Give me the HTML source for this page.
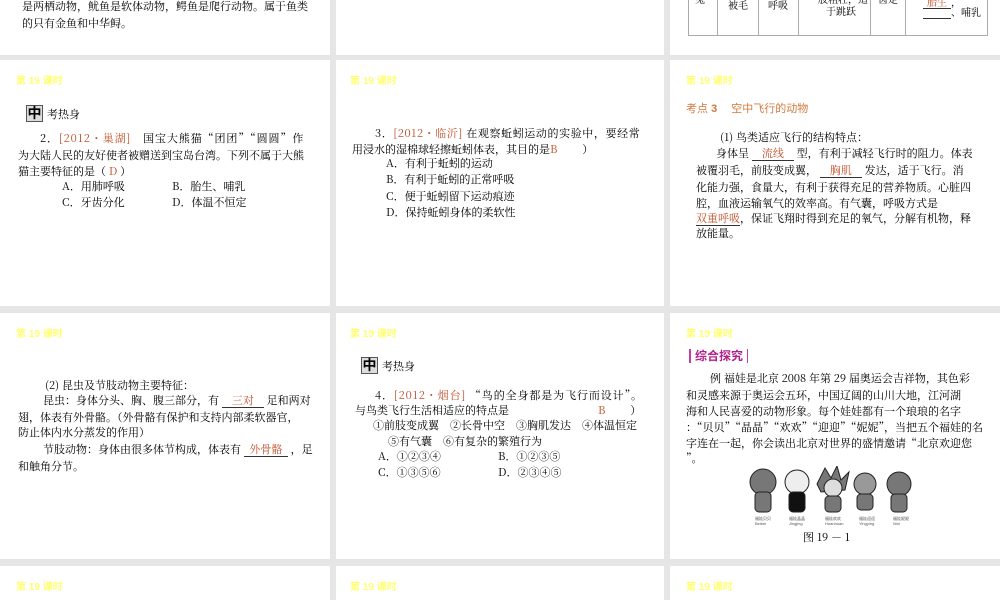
<!DOCTYPE html>
<html><head><meta charset="utf-8"><style>
body{margin:0;width:1000px;height:600px;background:#e6e6e6;position:relative;overflow:hidden;font-family:"Noto Serif CJK SC","Liberation Serif",serif;font-size:11px;color:#000}
.p{position:absolute;background:#fff}
.t{position:absolute;white-space:nowrap;line-height:16px}
.h{position:absolute;font-family:"Liberation Sans","Noto Sans CJK SC",sans-serif;font-weight:bold;font-size:10px;color:#ffff70;white-space:nowrap}
.r{color:#c0502a}
.u{display:inline-block;border-bottom:1px solid #333;text-align:center;color:#c0502a;line-height:13px}
.z{position:absolute;width:15px;height:15px;border:1px solid #555;background:#ddd;font-size:14px;line-height:15px;text-align:center;font-family:"Noto Sans CJK SC",sans-serif;font-weight:bold}
</style></head><body>
<div class="p" style="left:0;top:0;width:330px;height:55px"></div>
<div class="p" style="left:336px;top:0;width:328px;height:55px"></div>
<div class="p" style="left:670px;top:0;width:330px;height:55px"></div>
<div class="p" style="left:0;top:60px;width:330px;height:246px"></div>
<div class="p" style="left:336px;top:60px;width:328px;height:246px"></div>
<div class="p" style="left:670px;top:60px;width:330px;height:246px"></div>
<div class="p" style="left:0;top:313px;width:330px;height:246px"></div>
<div class="p" style="left:336px;top:313px;width:328px;height:246px"></div>
<div class="p" style="left:670px;top:313px;width:330px;height:246px"></div>
<div class="p" style="left:0;top:566px;width:330px;height:34px"></div>
<div class="p" style="left:336px;top:566px;width:328px;height:34px"></div>
<div class="p" style="left:670px;top:566px;width:330px;height:34px"></div>

<!-- top row -->
<div class="t" style="left:22px;top:-2px">是两栖动物，鱿鱼是软体动物，鳄鱼是爬行动物。属于鱼类</div>
<div class="t" style="left:22px;top:15px">的只有金鱼和中华鲟。</div>
<div style="position:absolute;left:688px;top:-10px;width:298px;height:45px;border:1px solid #aaa;border-top:none"></div>
<div style="position:absolute;left:717px;top:0;width:1px;height:35px;background:#aaa"></div>
<div style="position:absolute;left:758px;top:0;width:1px;height:35px;background:#aaa"></div>
<div style="position:absolute;left:798px;top:0;width:1px;height:35px;background:#aaa"></div>
<div style="position:absolute;left:870px;top:0;width:1px;height:35px;background:#aaa"></div>
<div style="position:absolute;left:905px;top:0;width:1px;height:35px;background:#aaa"></div>
<div class="t" style="left:695px;top:-9px;font-size:10px">兔</div>
<div class="t" style="left:728px;top:-3px;font-size:10px">被毛</div>
<div class="t" style="left:768px;top:-3px;font-size:10px">呼吸</div>
<div class="t" style="left:818px;top:-9px;font-size:10px">股粗壮，适</div>
<div class="t" style="left:826px;top:3px;font-size:10px">于跳跃</div>
<div class="t" style="left:878px;top:-9px;font-size:10px">齿定</div>
<div class="t" style="left:923px;top:-6px;font-size:10px"><span class="u" style="width:28px">胎生</span>，</div>
<div class="t" style="left:923px;top:4px;font-size:10px"><span class="u" style="width:28px">&nbsp;</span>、哺乳</div>

<!-- headers -->
<div class="h" style="left:16px;top:72px">第 19 课时</div>
<div class="h" style="left:350px;top:72px">第 19 课时</div>
<div class="h" style="left:686px;top:72px">第 19 课时</div>
<div class="h" style="left:16px;top:325px">第 19 课时</div>
<div class="h" style="left:350px;top:325px">第 19 课时</div>
<div class="h" style="left:686px;top:325px">第 19 课时</div>
<div class="h" style="left:16px;top:578px">第 19 课时</div>
<div class="h" style="left:350px;top:578px">第 19 课时</div>
<div class="h" style="left:686px;top:578px">第 19 课时</div>

<!-- col1 row2 -->
<div class="z" style="left:26px;top:105px">中</div>
<div class="t" style="left:47px;top:106px;font-size:11px">考热身</div>
<div class="t" style="left:40px;top:130px;letter-spacing:0.9px">2．<span class="r">[2012・巢湖]</span>　国宝大熊猫“团团”“圆圆”作</div>
<div class="t" style="left:18px;top:147px">为大陆人民的友好使者被赠送到宝岛台湾。下列不属于大熊</div>
<div class="t" style="left:18px;top:163px">猫主要特征的是（ <span class="r">D</span> ）</div>
<div class="t" style="left:62px;top:178px">A．用肺呼吸</div>
<div class="t" style="left:172px;top:178px">B．胎生、哺乳</div>
<div class="t" style="left:62px;top:194px">C．牙齿分化</div>
<div class="t" style="left:172px;top:194px">D．体温不恒定</div>

<!-- col2 row2 -->
<div class="t" style="left:375px;top:125px;letter-spacing:0.6px">3．<span class="r">[2012・临沂]</span> 在观察蚯蚓运动的实验中，要经常</div>
<div class="t" style="left:352px;top:141px">用浸水的湿棉球轻擦蚯蚓体表，其目的是<span class="r">B</span>　　 ）</div>
<div class="t" style="left:386px;top:155px">A．有利于蚯蚓的运动</div>
<div class="t" style="left:386px;top:171px">B．有利于蚯蚓的正常呼吸</div>
<div class="t" style="left:386px;top:188px">C．便于蚯蚓留下运动痕迹</div>
<div class="t" style="left:386px;top:204px">D．保持蚯蚓身体的柔软性</div>

<!-- col3 row2 -->
<div class="t" style="left:686px;top:101px;font-size:11px;color:#d07a40;font-family:'Liberation Sans','Noto Sans CJK SC',sans-serif">考点 <b>3</b>　 空中飞行的动物</div>
<div class="t" style="left:720px;top:129px">(1) 鸟类适应飞行的结构特点：</div>
<div class="t" style="left:716px;top:145px">身体呈 <span class="u" style="width:42px">流线</span> 型，有利于减轻飞行时的阻力。体表</div>
<div class="t" style="left:696px;top:162px">被覆羽毛，前肢变成翼， <span class="u" style="width:42px">胸肌</span> 发达，适于飞行。消</div>
<div class="t" style="left:696px;top:179px">化能力强，食量大，有利于获得充足的营养物质。心脏四</div>
<div class="t" style="left:696px;top:195px">腔，血液运输氧气的效率高。有气囊，呼吸方式是</div>
<div class="t" style="left:696px;top:210px"><span class="u" style="width:44px">双重呼吸</span>，保证飞翔时得到充足的氧气，分解有机物，释</div>
<div class="t" style="left:696px;top:225px">放能量。</div>

<!-- col1 row3 -->
<div class="t" style="left:45px;top:377px">(2) 昆虫及节肢动物主要特征：</div>
<div class="t" style="left:43px;top:392px">昆虫：身体分头、胸、腹三部分，有 <span class="u" style="width:42px">三对</span> 足和两对</div>
<div class="t" style="left:18px;top:409px">翅，体表有外骨骼。（外骨骼有保护和支持内部柔软器官，</div>
<div class="t" style="left:18px;top:424px">防止体内水分蒸发的作用）</div>
<div class="t" style="left:43px;top:441px">节肢动物：身体由很多体节构成，体表有 <span class="u" style="width:44px">外骨骼</span> ，足</div>
<div class="t" style="left:18px;top:458px">和触角分节。</div>

<!-- col2 row3 -->
<div class="z" style="left:361px;top:357px">中</div>
<div class="t" style="left:382px;top:358px;font-size:11px">考热身</div>
<div class="t" style="left:375px;top:387px;letter-spacing:0.9px">4．<span class="r">[2012・烟台]</span> “鸟的全身都是为飞行而设计”。</div>
<div class="t" style="left:355px;top:402px">与鸟类飞行生活相适应的特点是</div>
<div class="t" style="left:598px;top:402px"><span class="r">B</span>　　 ）</div>
<div class="t" style="left:373px;top:417px">①前肢变成翼　②长骨中空　③胸肌发达　④体温恒定</div>
<div class="t" style="left:388px;top:433px">⑤有气囊　⑥有复杂的繁殖行为</div>
<div class="t" style="left:378px;top:448px">A．①②③④</div>
<div class="t" style="left:498px;top:448px">B．①②③⑤</div>
<div class="t" style="left:378px;top:464px">C．①③⑤⑥</div>
<div class="t" style="left:498px;top:464px">D．②③④⑤</div>

<!-- col3 row3 -->
<div style="position:absolute;left:689px;top:349px;width:56px;height:14px;border-left:2px solid #c040a0;border-right:1px solid #c040a0;color:#b0208a;font-weight:bold;font-size:12px;line-height:14px;text-align:center;font-family:'Noto Sans CJK SC',sans-serif">综合探究</div>
<div class="t" style="left:710px;top:370px">例 福娃是北京 2008 年第 29 届奥运会吉祥物，其色彩</div>
<div class="t" style="left:686px;top:387px">和灵感来源于奥运会五环，中国辽阔的山川大地，江河湖</div>
<div class="t" style="left:686px;top:403px">海和人民喜爱的动物形象。每个娃娃都有一个琅琅的名字</div>
<div class="t" style="left:686px;top:419px">：“贝贝”“晶晶”“欢欢”“迎迎”“妮妮”，当把五个福娃的名</div>
<div class="t" style="left:686px;top:435px">字连在一起，你会读出北京对世界的盛情邀请“北京欢迎您</div>
<div class="t" style="left:686px;top:450px">”。</div>
<svg style="position:absolute;left:745px;top:466px" width="170" height="62">
<g fill="#777" stroke="#222" stroke-width="1">
<circle cx="18" cy="16" r="13"/><rect x="10" y="26" width="16" height="20" rx="4"/>
<circle cx="52" cy="16" r="12" fill="#eee"/><rect x="44" y="26" width="16" height="20" rx="4" fill="#111"/>
<path d="M72 18 L80 2 L86 12 L92 0 L96 14 L104 6 L100 24 L76 26Z"/><circle cx="88" cy="22" r="9" fill="#ddd"/><rect x="80" y="30" width="16" height="16" rx="4"/>
<circle cx="120" cy="18" r="11" fill="#999"/><rect x="112" y="28" width="16" height="16" rx="4"/>
<circle cx="154" cy="18" r="12"/><rect x="146" y="28" width="16" height="18" rx="4"/>
</g>
<g font-size="4" fill="#555" font-family="Liberation Sans"><text x="10" y="54">福娃贝贝</text><text x="44" y="54">福娃晶晶</text><text x="80" y="54">福娃欢欢</text><text x="114" y="54">福娃迎迎</text><text x="148" y="54">福娃妮妮</text>
<text x="10" y="59">Beibei</text><text x="44" y="59">Jingjing</text><text x="80" y="59">Huanhuan</text><text x="114" y="59">Yingying</text><text x="148" y="59">Nini</text></g>
</svg>
<div class="t" style="left:803px;top:529px">图 19 － 1</div>
</body></html>
